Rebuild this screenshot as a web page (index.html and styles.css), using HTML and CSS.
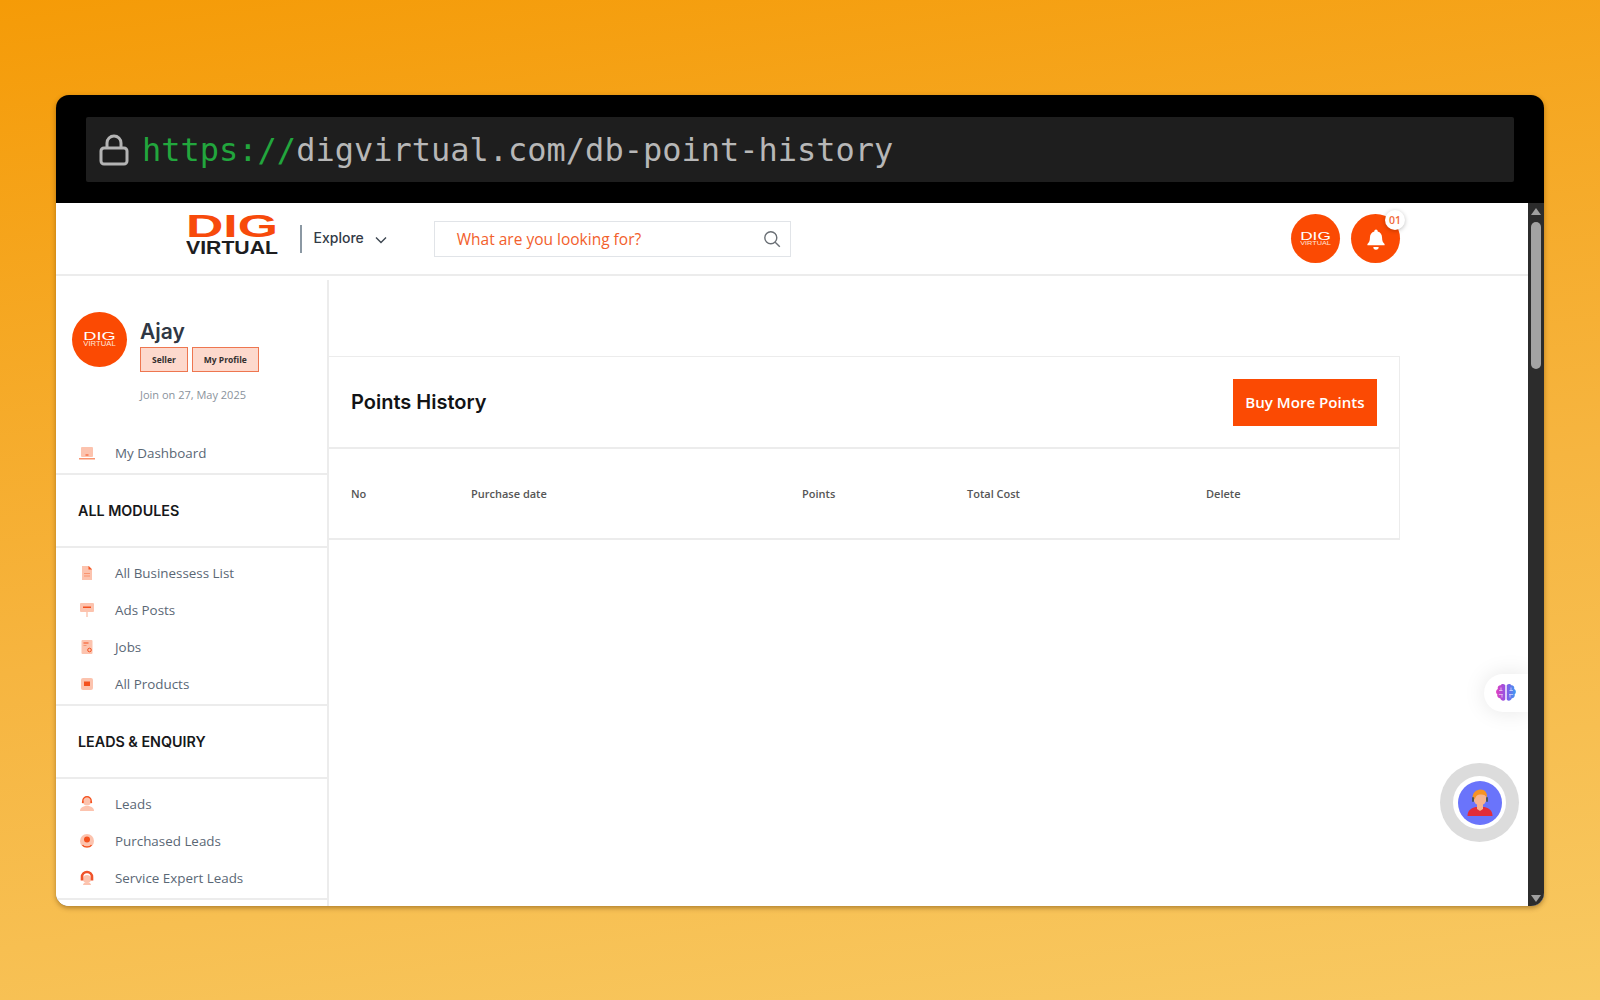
FILE: index.html
```html
<!DOCTYPE html>
<html lang="en">
<head>
<meta charset="utf-8">
<title>Points History</title>
<link rel="stylesheet" href="styles.css">
</head>
<body>
<div class="window">
  <div class="addressbar">
    <div class="address">
      <svg class="lock" viewBox="0 0 30 32"><path d="M8 14V9a7 7 0 0 1 14 0v5" /><rect x="2" y="14" width="26" height="16" rx="3"/></svg>
      <span class="url"><span class="scheme">https://</span>digvirtual.com/db-point-history</span>
    </div>
  </div>
  <div class="browser">
    <div class="viewport">
      <header class="topbar">
        <svg class="logo" viewBox="0 -8 92 54">
          <text x="0" y="21" textLength="92" lengthAdjust="spacingAndGlyphs" class="mk-dig">DIG</text>
          <text x="0" y="37.500" textLength="92" lengthAdjust="spacingAndGlyphs" class="mk-virtual">VIRTUAL</text>
        </svg>
        <span class="divider"></span>
        <span class="explore">Explore</span>
        <svg class="chevron" viewBox="0 0 12 8"><path d="M1 1.5l5 5 5-5"/></svg>
        <div class="search">
          <span class="search-text">What are you looking for?</span>
          <svg class="search-icon" viewBox="0 0 18 18"><circle cx="7.8" cy="7.8" r="6"/><path d="M12.2 12.2l4.6 4.6"/></svg>
        </div>
        <div class="top-actions">
          <span class="round">
            <svg class="mark-white" viewBox="0 -8 92 54">
              <text x="0" y="21" textLength="92" lengthAdjust="spacingAndGlyphs" class="mk-dig-w">DIG</text>
              <text x="0" y="37.500" textLength="92" lengthAdjust="spacingAndGlyphs" class="mk-virtual-w">VIRTUAL</text>
            </svg>
          </span>
          <span class="round">
            <svg class="bell" viewBox="0 0 24 26"><path d="M12 1.5a2 2 0 0 1 2 2v.6c3.4.9 5.3 3.7 5.3 7.4 0 3.6.9 5.6 3 7.6v1.4H1.7v-1.4c2.1-2 3-4 3-7.6 0-3.7 1.9-6.5 5.3-7.4v-.6a2 2 0 0 1 2-2z"/><path d="M8.8 22.6h6.4a3.2 3.2 0 0 1-6.4 0z"/></svg>
            <span class="badge">01</span>
          </span>
        </div>
      </header>
      <div class="page">
        <aside class="sidebar">
          <section class="profile">
            <span class="avatar">
              <svg class="mark-avatar" viewBox="0 -8 92 54">
                <text x="0" y="21" textLength="92" lengthAdjust="spacingAndGlyphs" class="mk-dig-w">DIG</text>
                <text x="0" y="37.500" textLength="92" lengthAdjust="spacingAndGlyphs" class="mk-virtual-w">VIRTUAL</text>
              </svg>
            </span>
            <div class="profile-info">
              <div class="name">Ajay</div>
              <div class="chips"><span class="chip">Seller</span><span class="chip">My Profile</span></div>
              <div class="joined">Join on 27, May 2025</div>
            </div>
          </section>
          <nav class="group group-first">
            <a class="item"><svg class="ico" viewBox="0 0 18 18"><rect class="lt" x="3" y="3" width="12" height="10" rx="1"/><rect class="md" x="1" y="14" width="16" height="1.5"/><rect class="st" x="7.5" y="10.5" width="3" height="1"/></svg>My Dashboard</a>
          </nav>
          <h3 class="heading">ALL MODULES</h3>
          <nav class="group">
            <a class="item"><svg class="ico" viewBox="0 0 18 18"><path class="lt" d="M4 2h7l3 3v11H4z"/><path class="st" d="M10.5 2l3.5 3.5h-3.5z"/><rect class="md" x="6" y="9" width="6" height="1"/><rect class="md" x="6" y="11.5" width="6" height="1"/></svg>All Businessess List</a>
            <a class="item"><svg class="ico" viewBox="0 0 18 18"><rect class="lt" x="2" y="2" width="14" height="9" rx="1"/><rect class="lt" x="8.3" y="11" width="1.4" height="5"/><rect class="st" x="5" y="5.5" width="8" height="1.5"/></svg>Ads Posts</a>
            <a class="item"><svg class="ico" viewBox="0 0 18 18"><rect class="lt" x="3.5" y="2" width="11" height="14" rx="1"/><rect class="st" x="5.5" y="4.5" width="5" height="1"/><rect class="md" x="5.5" y="7" width="3" height="1"/><circle class="ring" cx="11.5" cy="12" r="1.8"/></svg>Jobs</a>
            <a class="item"><svg class="ico" viewBox="0 0 18 18"><rect class="lt" x="3" y="3" width="12" height="12" rx="2"/><rect class="st" x="6" y="6.5" width="6" height="4.5"/></svg>All Products</a>
          </nav>
          <h3 class="heading">LEADS &amp; ENQUIRY</h3>
          <nav class="group">
            <a class="item"><svg class="ico" viewBox="0 0 18 18"><circle class="lt" cx="9" cy="6.5" r="4"/><path class="lt" d="M2 16c0-3.5 3-5 7-5s7 1.5 7 5z"/><path class="line" d="M4.8 7V6a4.2 4.2 0 0 1 8.4 0v1"/><circle class="st" cx="4.8" cy="7.2" r="1"/><circle class="st" cx="13.2" cy="7.2" r="1"/></svg>Leads</a>
            <a class="item"><svg class="ico" viewBox="0 0 18 18"><circle class="lt" cx="9" cy="9" r="7"/><circle class="st" cx="9" cy="7.5" r="3"/><path class="line" d="M4.5 13c1.5 2.5 7.5 2.5 9 0"/></svg>Purchased Leads</a>
            <a class="item"><svg class="ico" viewBox="0 0 18 18"><circle class="lt" cx="9" cy="10" r="4"/><path class="lt" d="M5 16c0-2 2-2.5 4-2.5s4 .5 4 2.5z"/><path class="gear" d="M4 11.5V8a5 5 0 0 1 10 0v3.5"/></svg>Service Expert Leads</a>
          </nav>
        </aside>
        <main class="content">
          <section class="card">
            <div class="card-head">
              <h2 class="card-title">Points History</h2>
              <a class="buy">Buy More Points</a>
            </div>
            <div class="table-head">
              <span class="col col-no">No</span>
              <span class="col col-date">Purchase date</span>
              <span class="col col-points">Points</span>
              <span class="col col-cost">Total Cost</span>
              <span class="col">Delete</span>
            </div>
          </section>
        </main>
      </div>
      <div class="brain-tab">
        <svg class="brain" viewBox="0 0 22 20">
          <defs><linearGradient id="bg" x1="0" x2="1" y1="0" y2="0"><stop offset="0" stop-color="#e23fc0"/><stop offset=".5" stop-color="#8a55e6"/><stop offset="1" stop-color="#3c9cf2"/></linearGradient></defs>
          <path fill="url(#bg)" d="M10.3 2.2C9 .5 6.5.6 5.6 2.3 3.5 2.3 2.3 4 2.8 6 .8 7 .5 10 2.3 11.3c-.6 2.3.9 4 2.900 4 .7 2.500 3.700 3.200 5.100 1.200zM11.700 2.200c1.300-1.700 3.800-1.600 4.700.1 2.100 0 3.300 1.700 2.800 3.700 2 1 2.300 4 .5 5.300.6 2.300-.9 4-2.900 4-.7 2.500-3.700 3.200-5.100 1.200z"/>
          <path class="brain-lines" d="M4 7.500h3.500M3.800 11.500h4M6 4.500v3M14.500 7.500H18M14 11.500h4.200M16 4.500v3M7 14.500v-3M15 14.500v-3"/>
        </svg>
      </div>
      <div class="support">
        <div class="support-ring">
          <svg class="agent" viewBox="0 0 44 44">
            <circle class="ag-bg" cx="22" cy="22" r="22"/>
            <path class="ag-body" d="M9.5 35c0-6 4-8 8-9h9c4 1 8 3 8 9z"/>
            <path class="ag-skin" d="M19 23h6v5l-3 2-3-2z"/>
            <circle class="ag-skin" cx="22" cy="18" r="6.5"/>
            <path class="ag-hair" d="M14.5 17c0-5 3.500-8.500 8-8.500s7 3.500 6.500 8c-1-2-3-3-5.500-3-3 0-5 .5-6 3l-1 2z"/>
            <rect class="ag-set" x="14" y="16" width="2" height="5" rx="1"/>
            <rect class="ag-set" x="28" y="16" width="2" height="5" rx="1"/>
          </svg>
        </div>
      </div>
    </div>
    <div class="scrollbar">
      <span class="arrow arrow-up"></span>
      <span class="thumb"></span>
      <span class="arrow arrow-down"></span>
    </div>
  </div>
</div>
</body>
</html>
```
FILE: styles.css
```css
* { box-sizing: border-box; }
html, body { height: 100%; }
body {
  margin: 0;
  padding: 95px 56px 94px;
  overflow: hidden;
  background: linear-gradient(172deg, #f59b07 0%, #f6b540 55%, #f8c962 100%);
  font-family: "Open Sans", "Liberation Sans", sans-serif;
}
.window {
  height: 811px;
  display: flex;
  flex-direction: column;
  border-radius: 13px;
  overflow: hidden;
  background: #000;
  box-shadow: 0 2px 5px rgba(90, 50, 0, .45);
}
.addressbar { height: 108px; flex: none; padding: 22px 30px 0; }
.address {
  height: 65px;
  display: flex;
  align-items: center;
  padding-left: 13px;
  gap: 13px;
  background: #1e1e1e;
  border-radius: 2px;
}
.lock { width: 30px; height: 32px; fill: none; stroke: #b4b4b4; stroke-width: 3; }
.url { font: 32px "DejaVu Sans Mono", "Liberation Mono", monospace; color: #b7b7b7; white-space: nowrap; }
.scheme { color: #22a63d; }

.browser { flex: 1; min-height: 0; display: flex; background: #fff; }
.viewport { position: relative; flex: 1; min-width: 0; overflow: hidden; background: #fff; }
.scrollbar {
  width: 16px;
  flex: none;
  display: flex;
  flex-direction: column;
  align-items: center;
  padding: 5px 0 4px;
  background: #2c2c2c;
}
.thumb { width: 10px; height: 147px; margin-top: 7px; border-radius: 5px; background: #a3a3a3; }
.arrow { width: 0; height: 0; border-left: 5px solid transparent; border-right: 5px solid transparent; }
.arrow-up { border-bottom: 7px solid #a0a0a0; }
.arrow-down { border-top: 7px solid #a0a0a0; margin-top: auto; }

.topbar {
  height: 73px;
  display: flex;
  align-items: center;
  padding: 0 128px 0 130px;
  border-bottom: 2px solid #ececec;
}
.logo { width: 92px; height: 54px; flex: none; margin-top: -8px; }
.mk-dig { font: 700 31px "Liberation Sans", sans-serif; fill: #f74a0b; }
.mk-virtual { font: 700 18px "Liberation Sans", sans-serif; fill: #1d1d1f; }
.mk-dig-w { font: 400 31px "Liberation Sans", sans-serif; fill: #fff; }
.mk-virtual-w { font: 400 18px "Liberation Sans", sans-serif; fill: #ffe6dc; }
.divider { width: 1.5px; height: 28px; margin-left: 22px; background: #8b98a3; }
.explore { margin-left: 12px; margin-top: -3px; font: 500 14px Inter, sans-serif; color: #333b46; }
.chevron { width: 12px; height: 8px; margin-left: 11px; margin-top: 3px; fill: none; stroke: #3d4650; stroke-width: 1.4; }
.search {
  width: 357px;
  height: 36px;
  margin-left: 47px;
  display: flex;
  align-items: center;
  justify-content: space-between;
  padding: 0 9px 0 22px;
  border: 1px solid #e1e4e8;
  background: #fff;
}
.search-text { font-size: 15.5px; color: #f2602c; }
.search-icon { width: 18px; height: 18px; fill: none; stroke: #6a6f75; stroke-width: 1.4; }
.top-actions { margin-left: auto; display: flex; gap: 11px; }
.round {
  position: relative;
  width: 49px;
  height: 49px;
  display: flex;
  align-items: center;
  justify-content: center;
  border-radius: 50%;
  background: #fb4a03;
}
.mark-white { width: 31px; height: 18px; }
.bell { width: 20px; height: 22px; fill: #fff; }
.badge {
  position: absolute;
  top: -4px;
  right: -5px;
  width: 20px;
  height: 20px;
  display: flex;
  align-items: center;
  justify-content: center;
  border-radius: 50%;
  background: #fff;
  box-shadow: 0 1px 4px rgba(0, 0, 0, .25);
  font-size: 10.5px;
  font-weight: 600;
  color: #f0693a;
}

.page { display: flex; height: 630px; }
.sidebar {
  width: 273px;
  flex: none;
  margin-top: 4px;
  overflow: hidden;
  border-right: 2px solid #ececec;
}
.profile { height: 144px; display: flex; align-items: flex-start; gap: 13px; padding: 32px 0 0 16px; }
.avatar {
  width: 55px;
  height: 55px;
  display: flex;
  align-items: center;
  justify-content: center;
  border-radius: 50%;
  background: #fb4a03;
  flex: none;
}
.mark-avatar { width: 33px; height: 19px; }
.name { margin-top: 5px; font: 600 21px/30px Inter, sans-serif; color: #2f3744; }
.chips { display: flex; gap: 4px; }
.chip {
  height: 25px;
  display: flex;
  align-items: center;
  padding: 0 11px;
  border: 1.5px solid #ee7650;
  background: #fdd9cd;
  font-size: 8.5px;
  font-weight: 700;
  color: #33302f;
}
.joined { margin-top: 15px; font-size: 11px; color: #8a929c; }
.group { padding: 6px 0 2px; border-bottom: 2px solid #ececec; }
.group-first { height: 51px; padding: 10px 0 0; }
.item {
  height: 37px;
  display: flex;
  align-items: center;
  gap: 19px;
  padding-left: 22px;
  font-size: 13.4px;
  font-weight: 500;
  color: #5a6775;
}
.ico { width: 18px; height: 18px; flex: none; }
.lt { fill: #fcc3ae; }
.md { fill: #f9946f; }
.st { fill: #f4511e; }
.ring { fill: #fcc3ae; stroke: #f4511e; stroke-width: 1; }
.line { fill: none; stroke: #f4511e; stroke-width: 1.4; }
.gear { fill: none; stroke: #f0532a; stroke-width: 2.6; }
.heading {
  height: 73px;
  margin: 0;
  display: flex;
  align-items: center;
  padding-left: 22px;
  border-bottom: 2px solid #ececec;
  font: 600 14.3px Inter, sans-serif;
  color: #17181a;
}

.content { flex: 1; min-width: 0; padding-top: 80px; }
.card { width: 1071px; border-style: solid; border-color: #ececec; border-width: 1.5px 1.5px 2px 0; }
.card-head {
  height: 92px;
  display: flex;
  align-items: center;
  justify-content: space-between;
  padding: 0 22px;
  border-bottom: 2px solid #ececec;
}
.card-title { margin: 0; font: 600 20px Inter, sans-serif; color: #121315; }
.buy {
  width: 144px;
  height: 47px;
  display: flex;
  align-items: center;
  justify-content: center;
  background: #fb4a03;
  font-size: 15.1px;
  font-weight: 600;
  color: #fff;
}
.table-head { height: 89px; display: flex; align-items: center; padding-left: 22px; }
.col { font-size: 11px; font-weight: 600; color: #565656; }
.col-no { width: 120px; }
.col-date { width: 331px; }
.col-points { width: 165px; }
.col-cost { width: 239px; }

.brain-tab {
  position: absolute;
  top: 471px;
  right: 0;
  width: 44px;
  height: 38px;
  display: flex;
  align-items: center;
  padding-left: 11px;
  border-radius: 19px 0 0 19px;
  background: #fff;
  box-shadow: 0 0 22px rgba(0, 0, 0, .1);
}
.brain { width: 22px; height: 20px; }
.brain-lines { fill: none; stroke: #fff; stroke-width: .8; opacity: .7; }
.support {
  position: absolute;
  top: 560px;
  right: 9px;
  width: 79px;
  height: 79px;
  display: flex;
  align-items: center;
  justify-content: center;
  border-radius: 50%;
  background: #dcdcdc;
}
.support-ring {
  width: 53px;
  height: 53px;
  display: flex;
  align-items: center;
  justify-content: center;
  border-radius: 50%;
  background: #fff;
}
.agent { width: 44px; height: 44px; }
.ag-bg { fill: #6a74fb; }
.ag-body { fill: #e32c38; }
.ag-skin { fill: #f7b48e; }
.ag-hair { fill: #f79324; }
.ag-set { fill: #4a5560; }
```
